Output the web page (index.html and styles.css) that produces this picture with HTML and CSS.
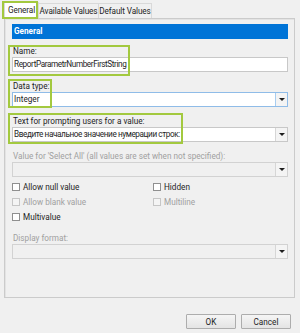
FILE: index.html
```html
<!DOCTYPE html>
<html lang="en">
  <head>
    <meta charset="UTF-8" />
    <title>Report Parameter Properties</title>
    <link rel="stylesheet" href="styles.css">
  </head>
  <body>

    <div class="tabs">
      <div class="tab active">General</div>
      <div class="tab">Available Values</div>
      <div class="tab">Default Values</div>
    </div>

    <div class="panel">
      <div class="header">General</div>

      <label class="caption first">Name:</label>
      <div class="field"><span class="value name">ReportParametrNumberFirstString</span></div>

      <label class="caption">Data type:</label>
      <div class="field combo focus">
        <span class="value">Integer</span>
        <span class="drop"><i></i></span>
      </div>

      <label class="caption">Text for prompting users for a value:</label>
      <div class="field combo">
        <span class="value cyr">Введите начальное значение нумерации строк:</span>
        <span class="drop"><i></i></span>
      </div>

      <label class="caption disabled">Value for 'Select All' (all values are set when not specified):</label>
      <div class="field combo off">
        <span class="value"></span>
        <span class="drop"><i></i></span>
      </div>

      <div class="checks">
        <div class="check"><span class="box"></span>Allow null value</div>
        <div class="check"><span class="box"></span>Hidden</div>
        <div class="check disabled"><span class="box"></span>Allow blank value</div>
        <div class="check disabled"><span class="box"></span>Multiline</div>
        <div class="check"><span class="box"></span>Multivalue</div>
      </div>

      <label class="caption disabled">Display format:</label>
      <div class="field combo off">
        <span class="value"></span>
        <span class="drop"><i></i></span>
      </div>
    </div>

    <div class="buttons">
      <button>OK</button>
      <button>Cancel</button>
    </div>

    <!-- annotation frames -->
    <div class="mark" style="left:2px;top:1px;width:36px;height:18px"></div>
    <div class="mark" style="left:8px;top:45px;width:122px;height:31px"></div>
    <div class="mark" style="left:8px;top:79px;width:44px;height:29px"></div>
    <div class="mark" style="left:8px;top:113px;width:175px;height:31px"></div>

  </body>
</html>
```

FILE: styles.css
```css
* { box-sizing: border-box; font-family: Roboto, sans-serif; }
body { margin: 0; background: #f0f0f0; color: #1e1e1e; font-size: 8.2px; position: relative; height: 333px; overflow: hidden; }

.tabs { display: flex; padding: 3px 0 0 4px; height: 18px; }
.tab {
  height: 15px;
  line-height: 14px;
  padding: 0;
  text-align: center;
  border: 1px solid #d9d9d9;
  border-bottom: none;
  background: #f0f0f0;
  margin-right: -1px;
  white-space: nowrap;
  letter-spacing: -0.1px;
}
.tab:nth-child(1) { width: 35px; }
.tab:nth-child(2) { width: 61px; }
.tab:nth-child(3) { width: 54px; }
.tab.active { background: #fff; height: 16px; margin-top: -1px; position: relative; z-index: 1; }

.panel {
  margin: 0 5px 0 4px;
  height: 280px;
  border: 1px solid #cbcbcb;
  box-shadow: inset 1px 1px 0 #e3e3e3;
  padding: 5px 6px 0 7px;
}

.header {
  height: 15px;
  line-height: 15px;
  background: #0074d7;
  color: #fff;
  font-weight: bold;
  padding-left: 2px;
  margin-bottom: 7px;
}

.caption { display: block; line-height: 11px; height: 11px; margin-top: 9px; padding-left: 1px; }
.caption.first { margin-top: 0; }
.caption.disabled, .check.disabled { color: #a0a0a0; }

.field {
  height: 15px;
  line-height: 13px;
  border: 1px solid #c8c8c8;
  background: #fff;
  padding-left: 1px;
  white-space: nowrap;
  overflow: hidden;
}
.value.name { letter-spacing: -0.4px; }
.value.cyr { letter-spacing: -0.4px; }
.combo { display: flex; padding-right: 0; }
.combo .value { flex: 1; overflow: hidden; }
.combo.focus { border-color: #8fbce8; }
.combo.off { background: #f0f0f0; border-color: #d2d2d2; }
.drop {
  width: 12px;
  border-left: 1px solid #d6d6d6;
  background: #f4f4f4;
  display: flex;
  align-items: center;
  justify-content: center;
}
.focus .drop { border-left-color: #a8cdf0; }
.drop i {
  width: 0;
  height: 0;
  border-left: 3px solid transparent;
  border-right: 3px solid transparent;
  border-top: 3px solid #1e1e1e;
}

.checks { display: grid; grid-template-columns: 141px 1fr; margin-top: 2px; }
.check { display: flex; align-items: center; height: 15px; }
.box {
  width: 8px;
  height: 8px;
  border: 1px solid #8f8f8f;
  background: #fff;
  margin-right: 3px;
}
.check.disabled .box { border-color: #c6c6c6; background: #f4f4f4; }

.buttons { display: flex; justify-content: flex-end; gap: 5px; padding: 16px 9px 0 0; }
.buttons button {
  width: 50px;
  height: 15px;
  padding: 0;
  font-size: 8.2px;
  color: #1e1e1e;
  background: linear-gradient(#f5f5f5, #e4e4e4);
  border: 1px solid #adadad;
  border-radius: 1px;
}

.mark { position: absolute; border: 2px solid #a3c93f; z-index: 2; }
```
